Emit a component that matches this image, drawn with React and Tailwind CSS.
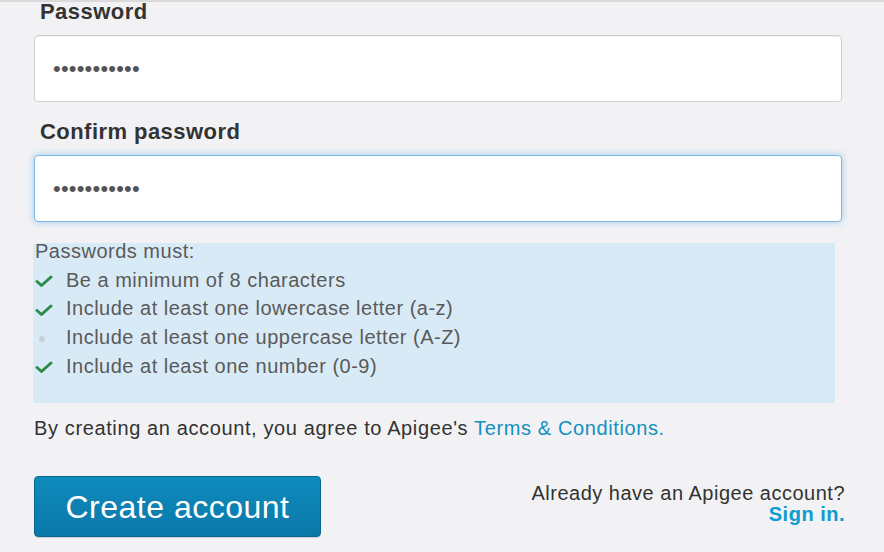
import React from "react";

const RULES = [
  { text: "Be a minimum of 8 characters", ok: true },
  { text: "Include at least one lowercase letter (a-z)", ok: true },
  { text: "Include at least one uppercase letter (A-Z)", ok: false },
  { text: "Include at least one number (0-9)", ok: true },
];

function Check() {
  return (
    <svg width="18" height="14" viewBox="0 0 18 14" className="block">
      <path
        d="M2 7.5 L6.5 11.5 L16 3"
        fill="none"
        stroke="#2c8c4c"
        strokeWidth="3"
        strokeLinecap="round"
        strokeLinejoin="round"
      />
    </svg>
  );
}

function MaskedField({ focused }) {
  return (
    <div
      className={
        "h-[67px] rounded-[4px] bg-white border flex items-center pl-[18px] " +
        (focused
          ? "border-[#7db9e4] shadow-[0_0_7px_rgba(82,168,236,0.55)]"
          : "border-[#cfcfcf] shadow-[inset_0_1px_1px_rgba(0,0,0,0.06)]")
      }
    >
      <span className="text-[22px] leading-none tracking-[0.2px] text-[#555]">
        •••••••••••
      </span>
    </div>
  );
}

export default function App() {
  return (
    <div className="h-[552px] w-full overflow-hidden bg-[#f2f2f4] border-t-2 border-[#dadada] font-['Liberation_Sans',Arial,sans-serif]">
      <div className="pl-[34px] pr-[42px]">
        {/* Password */}
        <div className="-mt-[2px] pl-[6px] text-[22px] leading-[24px] font-bold tracking-[0.45px] text-[#333]">
          Password
        </div>
        <div className="mt-[11px]">
          <MaskedField />
        </div>

        {/* Confirm */}
        <div className="mt-[18px] pl-[6px] text-[22px] leading-[24px] font-bold tracking-[0.45px] text-[#333]">
          Confirm password
        </div>
        <div className="mt-[11px]">
          <MaskedField focused />
        </div>

        {/* Rules box */}
        <div className="flow-root mt-[21px] mr-[7px] -ml-[1px] h-[160px] bg-[#d9eaf7] pl-[2px] text-[20px] tracking-[0.5px] text-[#5a5a5a]">
          <div className="-mt-[6px] leading-[28.7px]">Passwords must:</div>
          {RULES.map((r) => (
            <div key={r.text} className="flex items-center leading-[28.7px]">
              <div className="w-[31px] flex items-center pt-[2px]">
                {r.ok ? (
                  <Check />
                ) : (
                  <span className="ml-[4px] mt-[2px] block h-[6px] w-[6px] rounded-full bg-[#c8d0d8]" />
                )}
              </div>
              <span>{r.text}</span>
            </div>
          ))}
        </div>

        {/* Terms */}
        <div className="mt-[11px] text-[20px] leading-[28px] tracking-[0.62px] text-[#333]">
          By creating an account, you agree to Apigee's{" "}
          <a className="text-[#128fc1]">Terms &amp; Conditions.</a>
        </div>

        {/* Actions */}
        <div className="mt-[34px] flex items-start justify-between">
          <button className="h-[61px] w-[287px] rounded-[4px] border border-[#0a6890] bg-gradient-to-b from-[#0f8bbd] to-[#0a78a8] text-white text-[32px] tracking-[0.5px] shadow-[0_1px_1px_rgba(0,0,0,0.15)]">
            Create account
          </button>
          <div className="-mr-[3px] mt-[7px] text-right text-[20px] leading-[21px] tracking-[0.5px] text-[#333]">
            <div>Already have an Apigee account?</div>
            <div className="font-bold text-[#0c9bd2]">Sign in.</div>
          </div>
        </div>
      </div>
    </div>
  );
}
